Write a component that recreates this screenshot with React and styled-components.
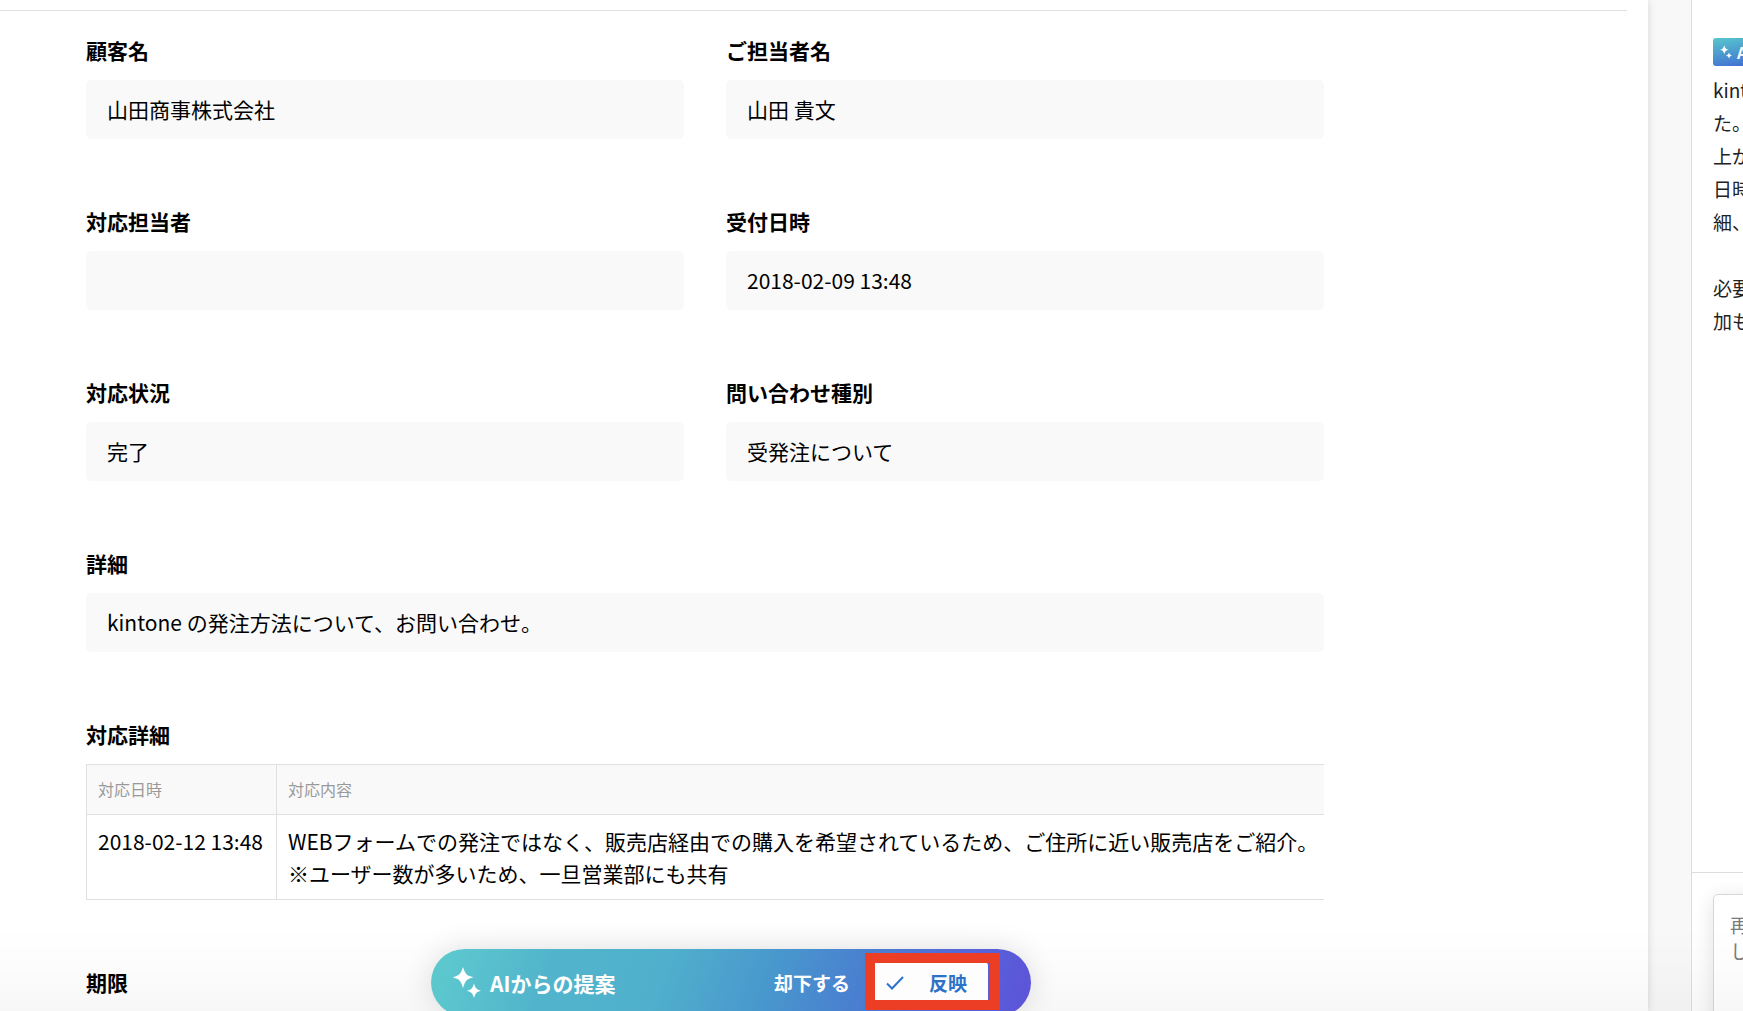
import React from 'react';
import styled, { createGlobalStyle } from 'styled-components';

const GlobalStyle = createGlobalStyle`
	* {
		box-sizing: border-box;
	}

	body {
		margin: 0;
		background: #f8f8f8;
		color: #000;
		font-family: "Noto Sans CJK JP", "Noto Sans", sans-serif;
		font-size: 21px;
		line-height: 32px;
	}

	button, textarea {
		font-family: inherit;
	}
`;

const Page = styled.div`
	position: relative;
	display: flex;
	gap: 43px;
	height: 100vh;
	overflow: hidden;
`;

const Record = styled.main`
	flex: 1;
	min-width: 0;
	background: white;
	box-shadow: 0 0 8px rgba(0, 0, 0, 0.14);
`;

const RecordTop = styled.div`
	height: 11px;
	margin-right: 21px;
	border-bottom: 1px solid #e0e0e0;
`;

const Form = styled.div`
	display: flex;
	flex-direction: column;
	gap: 68px;
	max-width: 1324px;
	padding: 25px 0 0 86px;
`;

const FieldRow = styled.div`
	display: grid;
	grid-template-columns: repeat(${props => props.$columns || 1}, minmax(0, 1fr));
	gap: 42px;
`;

const Label = styled.h2`
	margin: 0 0 16px;
	font-size: 21px;
	font-weight: bold;
	line-height: 28px;
`;

const Value = styled.div`
	height: 59px;
	padding: 13px 21px 14px;
	border-radius: 5px;
	background: #f9f9f9;
`;

const TableClip = styled.div`
	overflow: hidden;
`;

const Table = styled.table`
	min-width: 100%;
	border-collapse: collapse;
	white-space: nowrap;

	th, td {
		padding: 10px 11px;
		border: 1px solid #dfe1e1;
		border-right: none;
		text-align: left;
		vertical-align: top;
	}

	th {
		height: 50px;
		padding: 0 11px 2px;
		background: #f9f9f9;
		color: #999;
		font-size: 16px;
		font-weight: normal;
		vertical-align: middle;
	}

	th:first-child {
		min-width: 190px;
	}
`;

const Aside = styled.aside`
	display: flex;
	flex-direction: column;
	flex: none;
	width: 52px;
	overflow: hidden;
	border-left: 1px solid #dcdede;
	background: white;
	color: #222;
	font-size: 19px;
	line-height: 33px;
`;

const Messages = styled.div`
	flex: 1;
	width: 360px;
	padding: 38px 21px 0;
`;

const Badge = styled.div`
	display: flex;
	align-items: center;
	gap: 5px;
	width: 60px;
	height: 28px;
	margin-bottom: 7px;
	padding-left: 7px;
	border-radius: 3px;
	background: linear-gradient(170deg, #58c6cd, #4a96cf 50%, #3f62d6);
	color: white;
	font-size: 16px;
	font-weight: bold;
`;

const Message = styled.p`
	margin: 0;
	white-space: pre;
`;

const Composer = styled.div`
	width: 360px;
	height: 139px;
	padding: 21px 21px 0;
	border-top: 1px solid #dcdede;
`;

const Prompt = styled.textarea`
	display: block;
	width: 100%;
	height: 150px;
	padding: 17px 16px;
	border: 1px solid #d6d8d8;
	border-radius: 5px;
	background: white;
	box-shadow: 0 4px 20px rgba(0, 0, 0, 0.12);
	font-size: 19px;
	line-height: 26px;
	resize: none;

	&::placeholder {
		color: #7a7a7a;
	}
`;

const BottomShade = styled.div`
	position: absolute;
	right: 0;
	bottom: 0;
	left: 0;
	height: 86px;
	background: linear-gradient(rgba(0, 0, 0, 0), rgba(0, 0, 0, 0.01) 50%, rgba(0, 0, 0, 0.03));
	pointer-events: none;
`;

const SuggestionBar = styled.div`
	position: absolute;
	bottom: -5px;
	left: 431px;
	display: flex;
	align-items: center;
	width: 600px;
	height: 67px;
	padding: 0 43px 0 22px;
	border-radius: 34px;
	background: linear-gradient(110deg, #5cc8ce 3%, #52b4cc 20%, #50b0cc 38%, #4896cd 57%, #4a80d0 70%, #5763d9 88%, #5d52d8);
	box-shadow: 0 0 30px rgba(0, 0, 0, 0.13);
	color: white;
	font-weight: bold;
`;

const SuggestionTitle = styled.span`
	flex: 1;
	margin-left: 9px;
`;

const RejectButton = styled.button`
	margin-right: 15px;
	padding: 0;
	border: none;
	background: none;
	color: white;
	font-size: 19px;
	font-weight: bold;
	line-height: 32px;
	cursor: pointer;
`;

const Highlight = styled.div`
	position: relative;

	&::after {
		content: '';
		position: absolute;
		inset: -9px -12px -7px 0;
		border: 10px solid #ec3e25;
		pointer-events: none;
	}
`;

const ApplyButton = styled.button`
	display: flex;
	align-items: center;
	justify-content: space-between;
	width: 123px;
	height: 41px;
	padding: 0 21px;
	border: none;
	border-radius: 4px;
	background: #fdfdfd;
	color: #2d72c9;
	font-size: 19px;
	font-weight: bold;
	cursor: pointer;
`;

const Sparkles = ({ width, height }) => (
	<svg width={width} height={height} viewBox="0 0 28 31" fill="white" aria-hidden="true">
		<path d="M10 0C11.200 3.500 12.200 6 13.500 7.200C14.800 8.500 17 9.300 20.500 10.300C17 11.300 14.800 12.100 13.500 13.400C12.200 14.700 11.200 17 10 21C8.800 17 7.800 14.700 6.500 13.400C5.200 12.100 3 11.300 -0.500 10.300C3 9.300 5.200 8.500 6.500 7.200C7.800 6 8.800 3.500 10 0Z" />
		<path d="M21 16.500C21.800 19 22.500 20.700 23.400 21.500C24.300 22.400 25.800 23 28.200 23.800C25.800 24.600 24.300 25.200 23.400 26.100C22.500 27 21.800 28.600 21 31C20.200 28.600 19.500 27 18.600 26.100C17.700 25.200 16.200 24.600 13.800 23.800C16.200 23 17.700 22.400 18.600 21.500C19.500 20.700 20.200 19 21 16.500Z" />
	</svg>
);

const CheckMark = () => (
	<svg width="18" height="14" viewBox="0 0 18 14" fill="none" stroke="currentColor" strokeWidth="2" aria-hidden="true">
		<path d="M1 7.500L6 12.500L17 1" />
	</svg>
);

const Field = ({ label, children }) => (
	<div>
		<Label>{label}</Label>
		<Value>{children}</Value>
	</div>
);

const messageLines = ['kintone', 'た。', '上が', '日時', '細、', '', '必要', '加も'];

const App = () => (
	<Page>
		<GlobalStyle />
		<Record>
			<RecordTop />
			<Form>
				<FieldRow $columns={2}>
					<Field label="顧客名">山田商事株式会社</Field>
					<Field label="ご担当者名">山田 貴文</Field>
				</FieldRow>
				<FieldRow $columns={2}>
					<Field label="対応担当者" />
					<Field label="受付日時">2018-02-09 13:48</Field>
				</FieldRow>
				<FieldRow $columns={2}>
					<Field label="対応状況">完了</Field>
					<Field label="問い合わせ種別">受発注について</Field>
				</FieldRow>
				<FieldRow>
					<Field label="詳細">kintone の発注方法について、お問い合わせ。</Field>
				</FieldRow>
				<div>
					<Label>対応詳細</Label>
					<TableClip>
						<Table>
							<thead>
								<tr>
									<th>対応日時</th>
									<th>対応内容</th>
								</tr>
							</thead>
							<tbody>
								<tr>
									<td>2018-02-12 13:48</td>
									<td>
										WEBフォームでの発注ではなく、販売店経由での購入を希望されているため、ご住所に近い販売店をご紹介。
										<br />
										※ユーザー数が多いため、一旦営業部にも共有
									</td>
								</tr>
							</tbody>
						</Table>
					</TableClip>
				</div>
				<Label>期限</Label>
			</Form>
		</Record>

		<Aside>
			<Messages>
				<Badge>
					<Sparkles width={12} height={14} />
					AI
				</Badge>
				<Message>{messageLines.join('\n')}</Message>
			</Messages>
			<Composer>
				<Prompt aria-label="再し" placeholder={'再\nし'} />
			</Composer>
		</Aside>

		<BottomShade />
		<SuggestionBar>
			<Sparkles width={28} height={31} />
			<SuggestionTitle>AIからの提案</SuggestionTitle>
			<RejectButton type="button">却下する</RejectButton>
			<Highlight>
				<ApplyButton type="button">
					<CheckMark />
					反映
				</ApplyButton>
			</Highlight>
		</SuggestionBar>
	</Page>
);

export default App;
